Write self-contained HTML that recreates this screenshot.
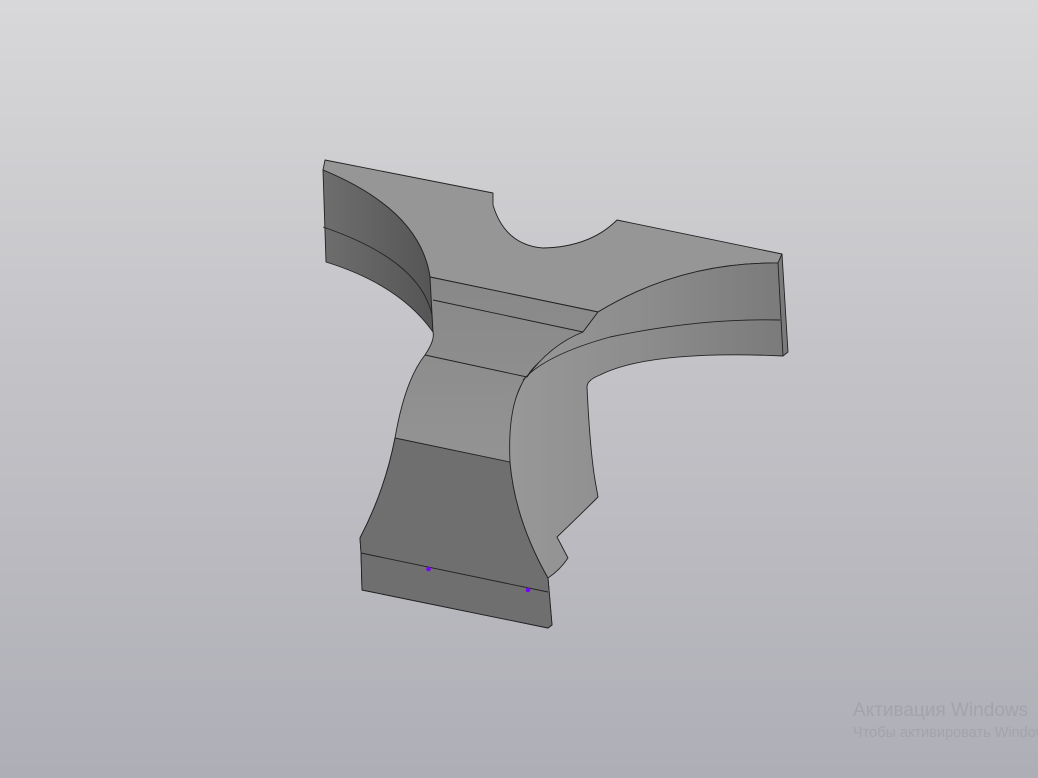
<!DOCTYPE html>
<html><head><meta charset="utf-8"><style>
html,body{margin:0;padding:0}
body{width:1038px;height:778px;overflow:hidden;background:linear-gradient(180deg,#d8d8da 0%,#c4c4c8 45%,#aeaeb6 100%);position:relative;font-family:"Liberation Sans",sans-serif}
svg{position:absolute;left:0;top:0}
.t1{position:absolute;left:853px;top:700px;font-size:19px;color:#a3a3ab;white-space:nowrap}
.t2{position:absolute;left:853px;top:725px;font-size:14.5px;color:#a3a3ab;white-space:nowrap}
</style></head><body>
<svg width="1038" height="778" viewBox="0 0 1038 778">
<defs>
<linearGradient id="lf" x1="0" x2="1" y1="0" y2="0"><stop offset="0" stop-color="#6e6e6e"/><stop offset="1" stop-color="#555"/></linearGradient>
<linearGradient id="rf" x1="0" x2="1" y1="0" y2="0"><stop offset="0" stop-color="#989898"/><stop offset="0.5" stop-color="#8c8c8c"/><stop offset="1" stop-color="#7a7a7a"/></linearGradient>
<linearGradient id="cf" x1="0" x2="0" y1="0" y2="1"><stop offset="0" stop-color="#888"/><stop offset="0.5" stop-color="#939393"/><stop offset="1" stop-color="#858585"/></linearGradient>
</defs>
<g stroke="#222" stroke-width="0.9" stroke-linejoin="round">
<path d="M325,160 L493,193 L493,205 Q505,245 543,248 Q590,247 617,220 L782,254 L778,263 Q680,262 598,312 L430,277 Q420,210 323,170 Z" fill="#969696"/>
<path d="M323,170 Q420,210 430,277 L433,332 Q400,285 326,262 Z" fill="url(#lf)"/>
<path d="M323,227 Q420,260 432,315" fill="none"/>
<path d="M430,277 L598,312 L583,332 Q535,360 527,377 Q515,390 512,420 L510,462 Q515,520 548,578 L552,625 L548,628 L362,590 L361,553 L360,538 Q385,490 395,438 Q405,380 425,355 Q435,340 433,332 Z" fill="url(#cf)"/>
<path d="M395,438 L510,462 Q515,520 548,578 L552,625 L548,628 L362,590 L361,553 L360,538 Q385,490 395,438 Z" fill="#6f6f6f"/>
<path d="M361,553 L548,592" fill="none"/>
<path d="M433,300 L583,332" fill="none"/>
<path d="M425,355 L527,377" fill="none"/>
<path d="M598,312 Q680,262 778,263 L782,254 L788,352 L783,356 Q650,350 600,375 Q587,380 587,387 Q590,450 595,480 L598,497 Q580,515 557,537 L568,558 Q560,570 548,578 Q515,520 510,462 Q508,420 517,395 Q525,375 527,377 Q550,345 583,332 Z" fill="url(#rf)"/>
<path d="M778,263 L783,356" fill="none"/>
<path d="M780,320 Q700,318 610,337 Q545,355 523,380" fill="none"/>
</g>
<circle cx="428.5" cy="569" r="2.3" fill="#7a00ff"/>
<circle cx="528" cy="590" r="2.3" fill="#7a00ff"/>
</svg>
<div class="t1">Активация Windows</div>
<div class="t2">Чтобы активировать Windows</div>
</body></html>
